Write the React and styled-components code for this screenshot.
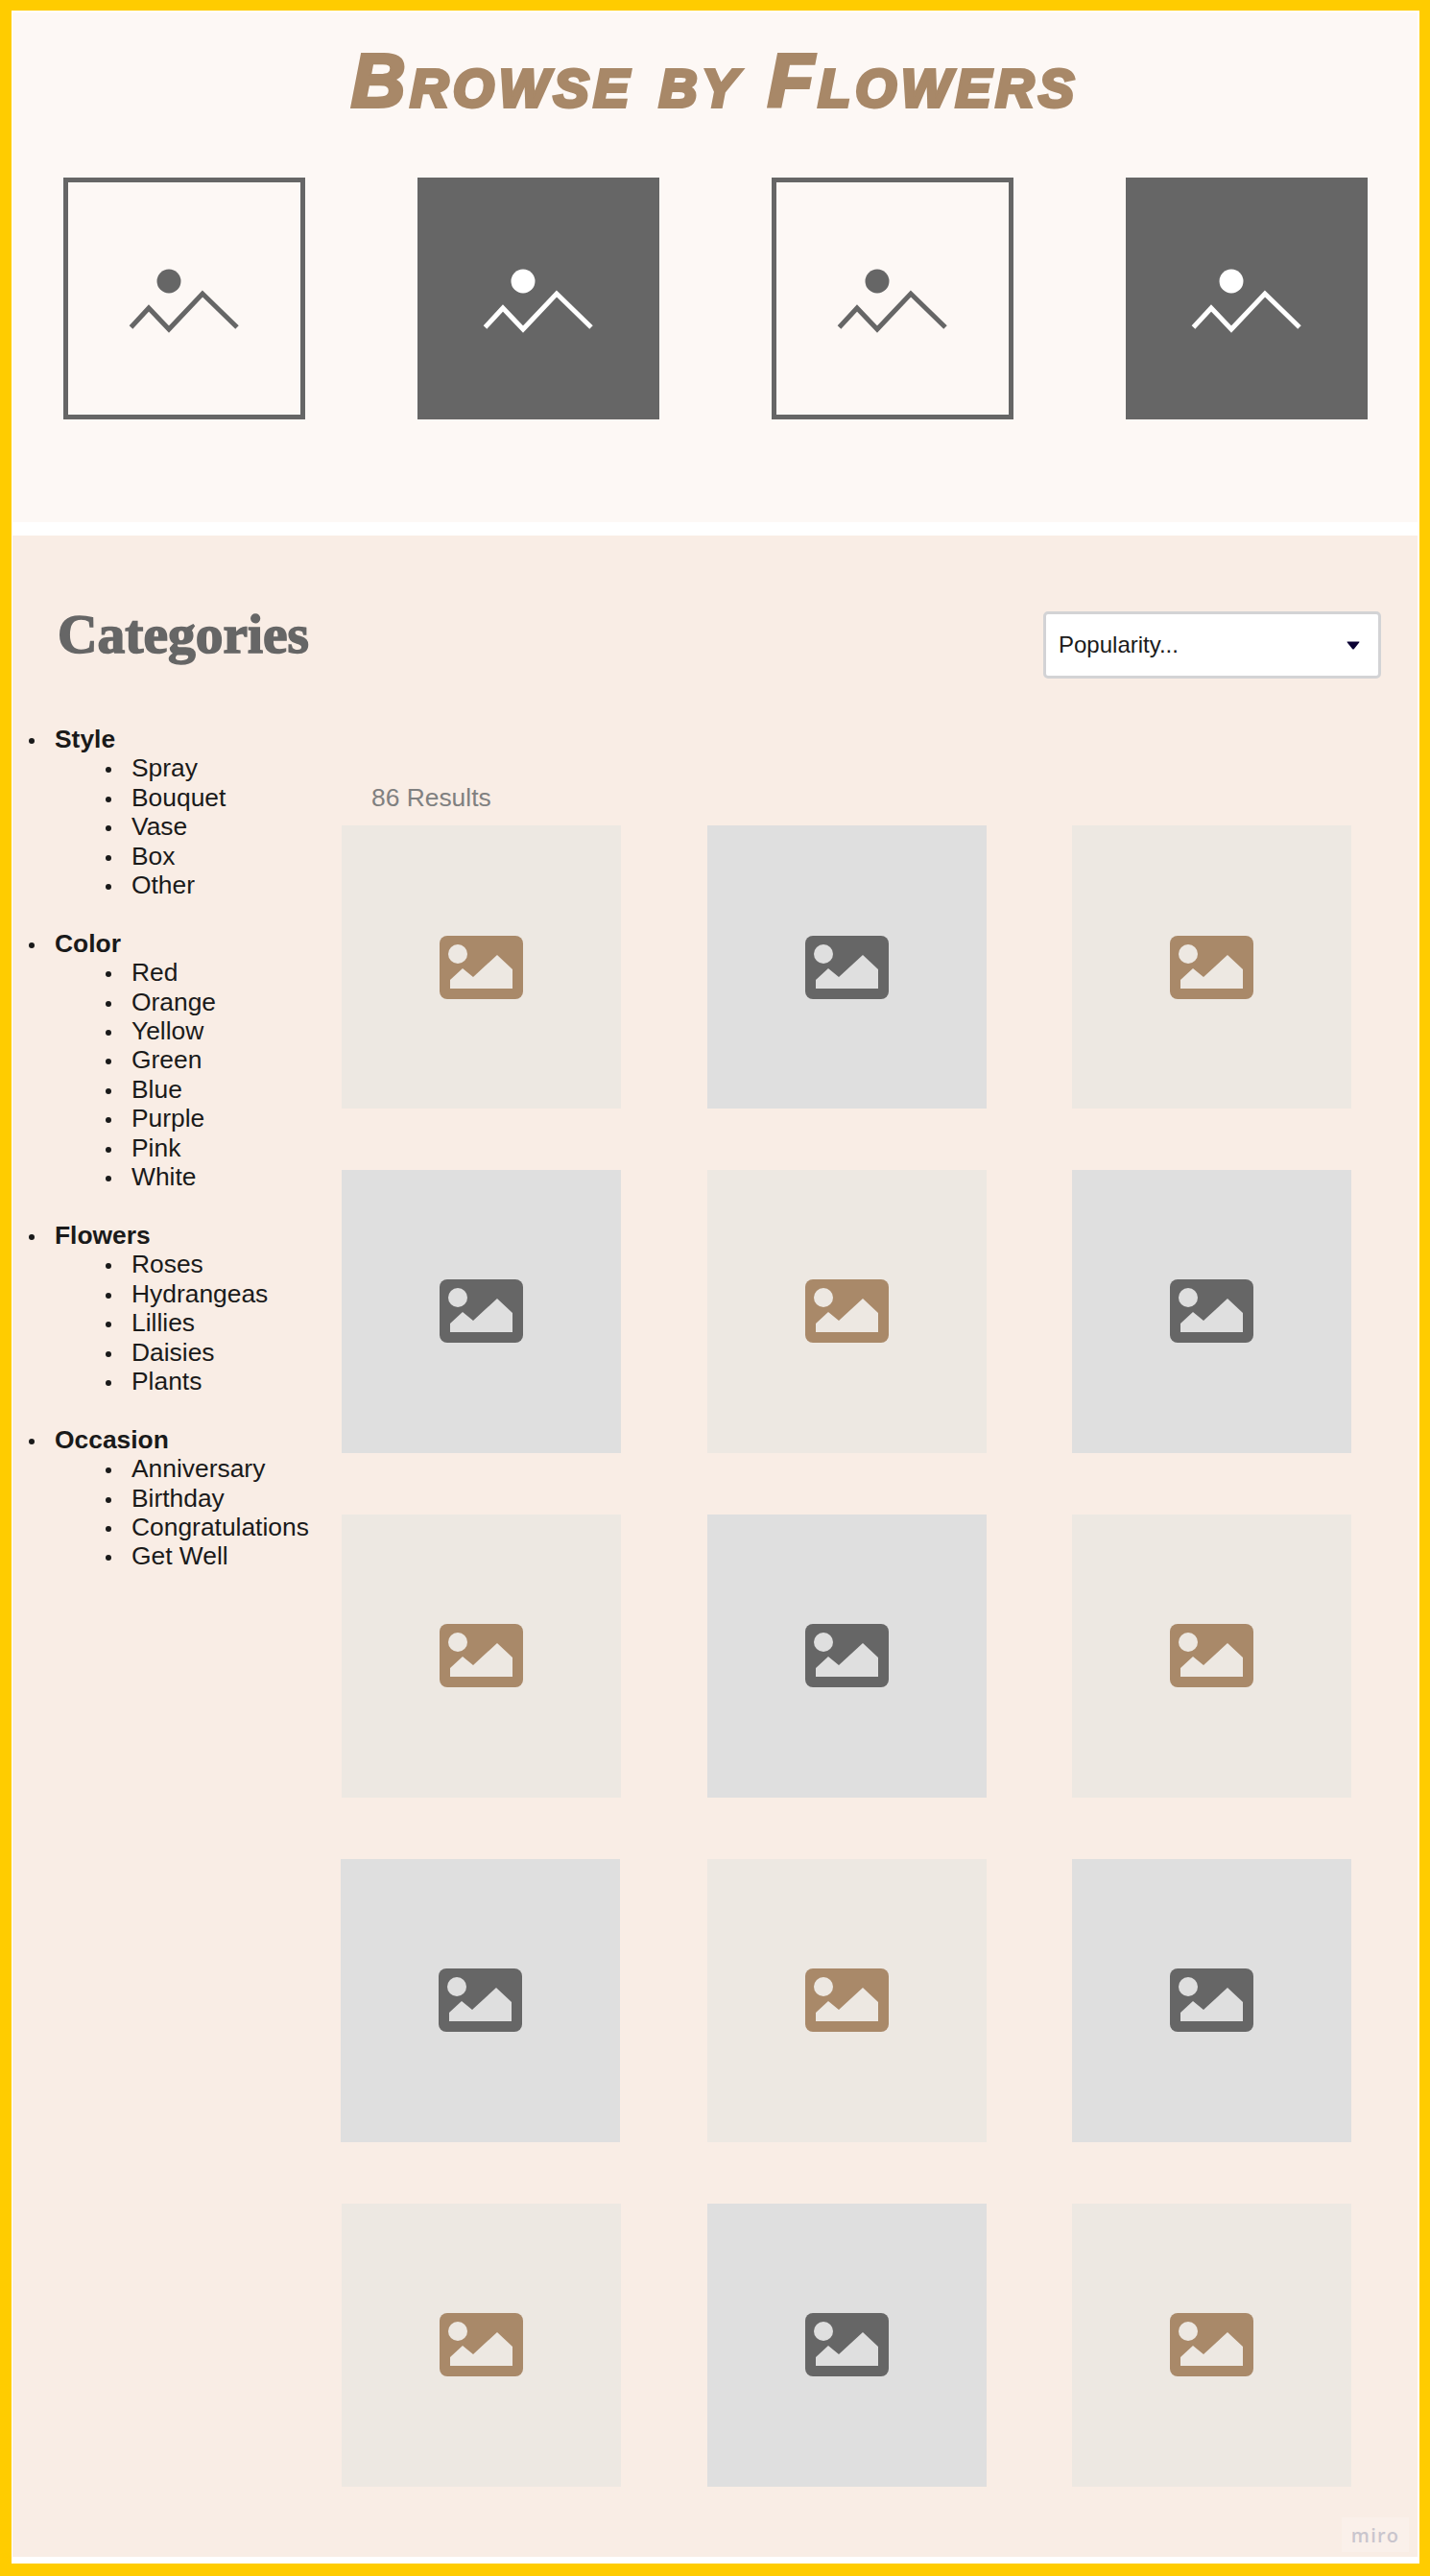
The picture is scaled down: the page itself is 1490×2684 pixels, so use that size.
import React from "react";
import styled, { createGlobalStyle } from "styled-components";

const Global = createGlobalStyle`
  html, body { margin: 0; padding: 0; background: #fff; }
  * { box-sizing: border-box; }
  body { font-family: "Liberation Sans", Arial, sans-serif; }
`;

const Frame = styled.div`
  position: relative;
  width: 1490px;
  height: 2684px;
  background: #fff;
  border-style: solid;
  border-color: #ffcc00;
  border-width: 11px 11px 13px 12px;
  padding: 2px 2px 7px 1px;
  display: flex;
  flex-direction: column;
  gap: 14px;
`;

const TopPanel = styled.section`
  height: 531px;
  background: #fdf8f5;
  display: flex;
  flex-direction: column;
  align-items: stretch;
`;

const Title = styled.h1`
  margin: 0;
  height: 172px;
  padding-top: 32px;
  text-align: center;
  font-family: "Liberation Sans", Arial, sans-serif;
  font-size: 78px;
  line-height: 78px;
  font-weight: 700;
  font-style: italic;
  font-variant: small-caps;
  letter-spacing: 5px;
  color: #a88868;
  -webkit-text-stroke: 4px #a88868;
  paint-order: stroke fill;
  stroke-linejoin: round;
`;

const TileRow = styled.div`
  display: grid;
  grid-template-columns: repeat(4, 252px);
  justify-content: space-between;
  padding: 0 52px 0 53px;
`;

const Tile = styled.div`
  width: 252px;
  height: 252px;
  background: ${(p) => (p.$filled ? "#666666" : "transparent")};
  border: ${(p) => (p.$filled ? "none" : "5px solid #666666")};
  display: flex;
  align-items: center;
  justify-content: center;
`;

const TileGlyph = styled.svg`
  width: 252px;
  height: 252px;
  flex: none;
  margin: ${(p) => (p.$filled ? "0" : "-5px")};
  color: ${(p) => (p.$filled ? "#ffffff" : "#666666")};
`;

const Section = styled.section`
  flex: 1;
  background: #f9ede5;
  padding-top: 79px;
  display: flex;
  flex-direction: column;
`;

const Header = styled.header`
  display: flex;
  align-items: center;
  justify-content: space-between;
  padding: 0 38px 0 47px;
  height: 70px;
  margin-bottom: 48px;
`;

const Heading = styled.h2`
  margin: 0 0 22px;
  font-family: "Liberation Serif", "Times New Roman", serif;
  font-size: 57.5px;
  line-height: 50px;
  font-weight: 700;
  color: #666666;
  -webkit-text-stroke: 1.6px #666666;
`;

const Select = styled.div`
  width: 352px;
  height: 70px;
  background: #fff;
  border: 3px solid #d3d3d5;
  border-radius: 5px;
  padding: 0 19px 0 13px;
  display: flex;
  align-items: center;
  justify-content: space-between;
  font-size: 24px;
  color: #1a1a1a;
`;

const Body = styled.div`
  display: grid;
  grid-template-columns: 343px 1fr;
`;

const Sidebar = styled.ul`
  margin: 0;
  padding: 0 0 0 17px;
  list-style: none;
  font-size: 26.4px;
  line-height: 30.4px;
  color: #1a1a1a;
  display: flex;
  flex-direction: column;
  gap: 30.4px;
`;

const Bullet = styled.span`
  display: inline-block;
  width: 6px;
  height: 6px;
  border-radius: 50%;
  background: #1a1a1a;
  margin-right: 21px;
  vertical-align: middle;
`;

const GroupName = styled.strong`
  font-weight: 700;
`;

const SubList = styled.ul`
  margin: 0;
  padding: 0 0 0 80px;
  list-style: none;
`;

const SubItem = styled.li`
  white-space: nowrap;
`;

const Main = styled.div`
  padding-top: 61px;
`;

const Results = styled.div`
  padding-left: 31px;
  height: 44px;
  font-size: 26.4px;
  line-height: 30.4px;
  color: #808080;
`;

const Grid = styled.div`
  display: grid;
  grid-template-columns: repeat(3, 291px);
  grid-auto-rows: 295px;
  column-gap: 89.5px;
  row-gap: 63.9px;
`;

const Card = styled.div`
  margin: ${(p) => (p.$nudge ? "0 1px 0 -1px" : "0")};
  background: ${(p) => (p.$tone === "tan" ? "#ede8e2" : "#dfdfdf")};
  display: flex;
  align-items: center;
  justify-content: center;
`;

const CardGlyph = styled.svg`
  width: 87px;
  height: 66px;
  color: ${(p) => (p.$tone === "tan" ? "#a98969" : "#666666")};
  display: block;
`;

const Badge = styled.div`
  position: absolute;
  right: 11px;
  bottom: 12px;
  width: 70px;
  height: 36px;
  background: rgba(255, 255, 255, 0.2);
  display: flex;
  align-items: center;
  justify-content: center;
  font-family: "Open Sans", sans-serif;
  font-size: 20px;
  font-weight: 600;
  letter-spacing: 1.2px;
  color: #c9c5cd;
`;

const OutlinePicture = ({ filled }) => (
  <TileGlyph viewBox="0 0 252 252" $filled={filled}>
    <circle cx="110" cy="108" r="12.5" fill="currentColor" />
    <polyline
      points="70.5,156 89,136 110,158 145,121 181,156"
      fill="none"
      stroke="currentColor"
      strokeWidth="5"
    />
  </TileGlyph>
);

const CardPicture = ({ tone }) => {
  const bg = tone === "tan" ? "#ede8e2" : "#dfdfdf";
  return (
    <CardGlyph viewBox="0 0 87 66" $tone={tone}>
      <rect width="87" height="66" rx="8" fill="currentColor" />
      <circle cx="19" cy="19" r="10" fill={bg} />
      <polygon points="11,46 24,34 35,43 60,20 76,35 76,55 11,55" fill={bg} />
    </CardGlyph>
  );
};

const groups = [
  { name: "Style", items: ["Spray", "Bouquet", "Vase", "Box", "Other"] },
  { name: "Color", items: ["Red", "Orange", "Yellow", "Green", "Blue", "Purple", "Pink", "White"] },
  { name: "Flowers", items: ["Roses", "Hydrangeas", "Lillies", "Daisies", "Plants"] },
  { name: "Occasion", items: ["Anniversary", "Birthday", "Congratulations", "Get Well"] },
];

const cards = Array.from({ length: 15 }, (_, i) => (i % 2 === 0 ? "tan" : "gray"));

export default function App() {
  return (
    <>
      <Global />
      <Frame>
        <TopPanel>
          <Title>Browse by Flowers</Title>
          <TileRow>
            {[false, true, false, true].map((filled, i) => (
              <Tile key={i} $filled={filled}>
                <OutlinePicture filled={filled} />
              </Tile>
            ))}
          </TileRow>
        </TopPanel>
        <Section>
          <Header>
            <Heading>Categories</Heading>
            <Select>
              Popularity...
              <svg width="14" height="9" viewBox="0 0 14 9">
                <path d="M1 0.5 H13 Q14 0.5 13.2 1.5 L8 8 Q7 9 6 8 L0.8 1.5 Q0 0.5 1 0.5Z" fill="#0a0033" />
              </svg>
            </Select>
          </Header>
          <Body>
            <Sidebar>
              {groups.map((g) => (
                <li key={g.name}>
                  <Bullet />
                  <GroupName>{g.name}</GroupName>
                  <SubList>
                    {g.items.map((it) => (
                      <SubItem key={it}>
                        <Bullet />
                        {it}
                      </SubItem>
                    ))}
                  </SubList>
                </li>
              ))}
            </Sidebar>
            <Main>
              <Results>86 Results</Results>
              <Grid>
                {cards.map((tone, i) => (
                  <Card key={i} $tone={tone} $nudge={i === 9}>
                    <CardPicture tone={tone} />
                  </Card>
                ))}
              </Grid>
            </Main>
          </Body>
        </Section>
        <Badge>miro</Badge>
      </Frame>
    </>
  );
}
